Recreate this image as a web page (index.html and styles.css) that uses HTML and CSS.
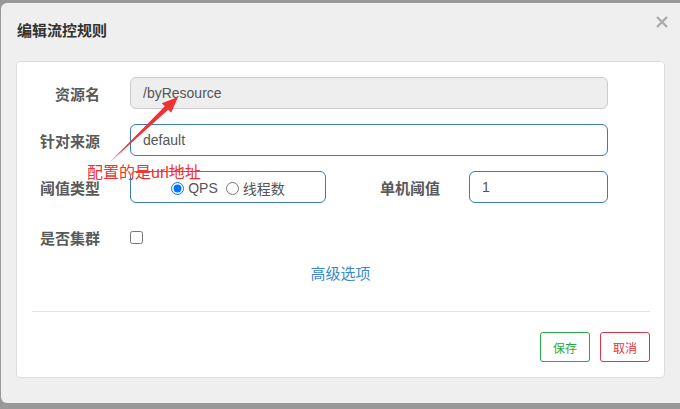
FILE: index.html
```html
<!DOCTYPE html>
<html lang="zh-CN">
<head>
    <meta charset="UTF-8">
    <title>编辑流控规则</title>
    <link rel="stylesheet" href="styles.css">
</head>
<body>
    <div class="modal">
        <div class="modal-header">
            <h4 class="modal-title">编辑流控规则</h4>
            <span class="close">
                <svg width="12" height="12" viewBox="0 0 12 12">
                    <path d="M1 1 L11 11 M11 1 L1 11" stroke="#ababab" stroke-width="2.4" fill="none"/>
                </svg>
            </span>
        </div>

        <div class="panel">
            <div class="form-row">
                <label class="form-label">资源名</label>
                <input class="form-input wide" type="text" value="/byResource" disabled>
            </div>

            <div class="form-row">
                <label class="form-label">针对来源</label>
                <input class="form-input wide" type="text" value="default">
            </div>

            <div class="form-row">
                <label class="form-label">阈值类型</label>
                <div class="radio-box">
                    <label class="radio"><input type="radio" name="grade" checked> QPS</label>
                    <label class="radio"><input type="radio" name="grade"> 线程数</label>
                </div>
                <label class="form-label second">单机阈值</label>
                <input class="form-input narrow" type="text" value="1">
            </div>

            <div class="form-row cluster">
                <label class="form-label">是否集群</label>
                <input class="check" type="checkbox">
            </div>

            <div class="advanced"><a href="#">高级选项</a></div>

            <div class="divider"></div>

            <div class="footer">
                <button class="btn btn-save">保存</button>
                <button class="btn btn-cancel">取消</button>
            </div>
        </div>
    </div>

    <!-- 标注 -->
    <svg class="note-arrow" width="680" height="409" viewBox="0 0 680 409">
        <polygon points="109.5,162.5 164.8,106.2 161.8,103.2 178,97 171.2,112.8 168.2,109.8" fill="#f23131"/>
    </svg>
    <div class="note-text">配置的是url地址</div>
</body>
</html>
```

FILE: styles.css
```css
body {
    margin: 0;
    background-color: #999;
    font-family: "Liberation Sans", "Noto Sans CJK SC", sans-serif;
    height: 409px;
    overflow: hidden;
}

.modal {
    margin: 3px 0 0 1px;
    width: 679px;
    height: 400px;
    background-color: #efefef;
    border-radius: 6px 0 0 6px;
    box-sizing: border-box;
    padding: 0 15px;
}

.modal-header {
    height: 58px;
    display: flex;
    align-items: center;
    justify-content: space-between;
    padding-left: 1px;
    padding-right: 0;
}

.modal-title {
    margin: 0;
    font-size: 15px;
    font-weight: bold;
    color: #333;
    position: relative;
    top: -3px;
}

.close {
    display: flex;
    margin-right: -3px;
    position: relative;
    top: -10px;
}

.panel {
    background-color: #fff;
    border: 1px solid #ddd;
    border-radius: 4px;
    height: 317px;
    box-sizing: border-box;
    padding-top: 15px;
}

.form-row {
    display: flex;
    align-items: center;
    height: 32px;
    margin-bottom: 15px;
}

.form-label {
    width: 83px;
    margin-right: 30px;
    text-align: right;
    font-size: 15px;
    font-weight: bold;
    color: #595959;
}

.form-label.second {
    width: 114px;
    margin-right: 29px;
}

.form-input {
    height: 32px;
    box-sizing: border-box;
    border: 1px solid #3d7ab8;
    border-radius: 6px;
    padding: 0 12px;
    font-family: "Liberation Sans", "Noto Sans CJK SC", sans-serif;
    font-size: 14px;
    color: #555;
    background-color: #fff;
    outline: none;
}

.form-input:disabled {
    background-color: #eee;
    border-color: #ccc;
    color: #555;
}

.wide {
    width: 478px;
}

.narrow {
    width: 139px;
}

.radio-box {
    width: 196px;
    height: 32px;
    box-sizing: border-box;
    border: 1px solid #3d7ab8;
    border-radius: 6px;
    display: flex;
    align-items: center;
    justify-content: center;
    gap: 8px;
    padding-top: 2px;
}

.radio {
    display: flex;
    align-items: center;
    font-size: 14px;
    color: #555;
}

.radio input {
    margin: 0 4px 0 0;
    width: 13px;
    height: 13px;
}

.cluster {
    margin-top: 18px;
    margin-bottom: 0;
}

.check {
    margin: 0;
    width: 13px;
    height: 13px;
}

.advanced {
    text-align: center;
    margin-top: 11px;
    font-size: 15px;
    line-height: 20px;
}

.advanced a {
    color: #3a87cc;
    text-decoration: none;
}

.divider {
    margin: 27px 14px 0 15px;
    border-top: 1px solid #e2e2e2;
}

.footer {
    display: flex;
    justify-content: flex-end;
    gap: 10px;
    margin: 20px 14px 0 0;
}

.btn {
    width: 50px;
    height: 30px;
    background-color: #fff;
    border-radius: 3px;
    font-family: "Liberation Sans", "Noto Sans CJK SC", sans-serif;
    font-size: 12px;
    padding: 0;
}

.btn-save {
    border: 1px solid #28a745;
    color: #28a745;
}

.btn-cancel {
    border: 1px solid #dc3545;
    color: #dc3545;
}

.note-arrow {
    position: absolute;
    left: 0;
    top: 0;
    pointer-events: none;
}

.note-text {
    position: absolute;
    left: 87px;
    top: 164px;
    font-size: 16px;
    line-height: 18px;
    color: #f23131;
    font-family: "Liberation Sans", "Noto Sans CJK SC", sans-serif;
}
```
